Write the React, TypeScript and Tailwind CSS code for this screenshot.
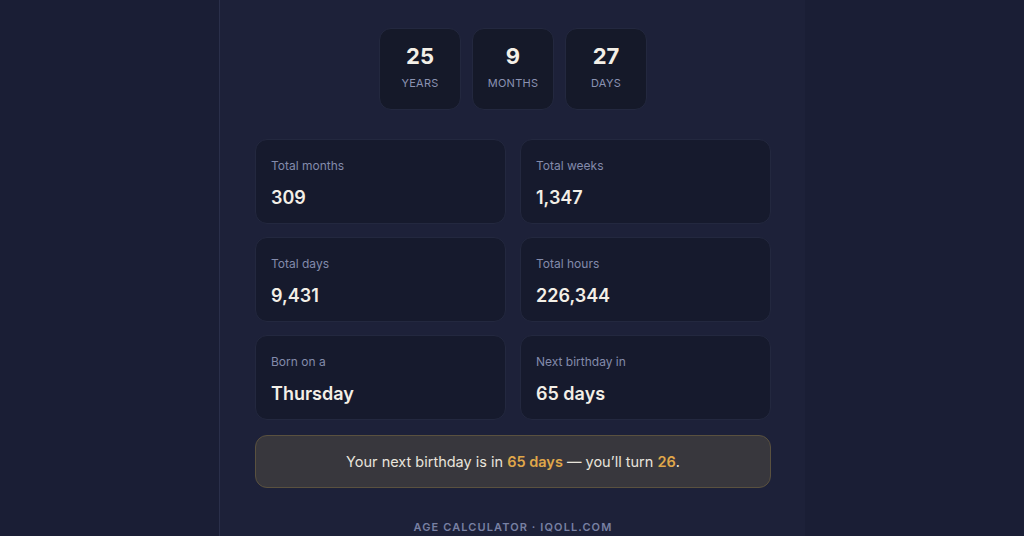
import React from "react";

interface Stat {
  label: string;
  value: string;
}

const STATS: Stat[] = [
  { label: "Total months", value: "309" },
  { label: "Total weeks", value: "1,347" },
  { label: "Total days", value: "9,431" },
  { label: "Total hours", value: "226,344" },
  { label: "Born on a", value: "Thursday" },
  { label: "Next birthday in", value: "65 days" },
];

const PARTS = [
  { n: "25", label: "Years" },
  { n: "9", label: "Months" },
  { n: "27", label: "Days" },
];

export default function App() {
  return (
    <div
      className="h-screen w-full overflow-hidden bg-[#1a1e35] flex justify-center"
      style={{ fontFamily: "Inter, 'Noto Sans', sans-serif" }}
    >
      <div className="w-[586px] h-full bg-[#1d2139] border-l border-[#2a2f4a] pl-[35px] pr-[34px] pt-7 flex flex-col">
        <div className="flex justify-center gap-[11px]">
          {PARTS.map((p) => (
            <div
              key={p.label}
              className="w-[82px] h-[82px] rounded-xl bg-[#151929] border border-[#23283f] flex flex-col items-center justify-center pb-1"
            >
              <div className="text-[22px] font-bold leading-none text-[#f3efe7]">{p.n}</div>
              <div className="mt-[11px] text-[11px] uppercase leading-none tracking-wide text-[#8a92b2]">
                {p.label}
              </div>
            </div>
          ))}
        </div>

        <div className="mt-[29px] grid grid-cols-2 gap-x-[14px] gap-y-[13px]">
          {STATS.map((s) => (
            <div
              key={s.label}
              className="h-[85px] rounded-xl bg-[#161a2d] border border-[#23283f] px-[15px] pt-[20px]"
            >
              <div className="text-[12px] leading-none text-[#838bab]">{s.label}</div>
              <div className="mt-[17px] text-[18px] font-semibold leading-none text-[#f3efe7]">
                {s.value}
              </div>
            </div>
          ))}
        </div>

        <div className="mt-[15px] h-[53px] rounded-xl bg-[#38373d] border border-[#5a513f] flex items-center justify-center text-[14.5px] text-[#e8e4dc]">
          <span>
            Your next birthday is in{" "}
            <span className="font-semibold text-[#e0a84a]">65 days</span> — you’ll turn{" "}
            <span className="font-semibold text-[#e0a84a]">26</span>.
          </span>
        </div>

        <div className="mt-[34px] text-center text-[11px] font-semibold tracking-[0.1em] text-[#7880a3] leading-none">
          AGE CALCULATOR · IQOLL.COM
        </div>
      </div>
    </div>
  );
}
